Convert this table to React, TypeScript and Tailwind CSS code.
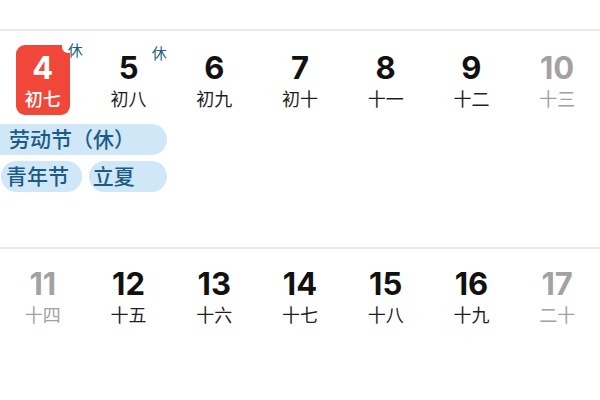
import React from "react";

type Day = { d: string; lunar: string; muted?: boolean; today?: boolean; rest?: boolean };

const week1: Day[] = [
  { d: "4", lunar: "初七", today: true, rest: true },
  { d: "5", lunar: "初八", rest: true },
  { d: "6", lunar: "初九" },
  { d: "7", lunar: "初十" },
  { d: "8", lunar: "十一" },
  { d: "9", lunar: "十二" },
  { d: "10", lunar: "十三", muted: true },
];

const week2: Day[] = [
  { d: "11", lunar: "十四", muted: true },
  { d: "12", lunar: "十五" },
  { d: "13", lunar: "十六" },
  { d: "14", lunar: "十七" },
  { d: "15", lunar: "十八" },
  { d: "16", lunar: "十九" },
  { d: "17", lunar: "二十", muted: true },
];

const cjk = "font-['Inter','Noto_Sans_CJK_SC',sans-serif]";

function DayCell({ day }: { day: Day }) {
  if (day.today) {
    return (
      <div className="flex justify-center">
        <div className="relative flex h-[70px] w-[54px] flex-col items-center rounded-[9px] bg-[#f1473a] pt-[5px] text-white">
          <span className="text-[31px] font-bold leading-[36px]">{day.d}</span>
          <span className="mt-[3px] text-[18px] font-medium leading-[22px]">{day.lunar}</span>
          <span className="absolute -right-[4px] -top-[4px] h-[12px] w-[12px] rounded-full bg-white" />
          <span className="absolute -right-[13px] -top-[2px] text-[15px] leading-[16px] text-[#245f80]">休</span>
        </div>
      </div>
    );
  }
  return (
    <div className="relative flex flex-col items-center pt-[5px]">
      <span
        className={`text-[31px] font-bold leading-[36px] ${
          day.muted ? "text-[#a2a2a2]" : "text-[#111111]"
        }`}
      >
        {day.d}
      </span>
      <span
        className={`mt-[3px] text-[18px] leading-[22px] ${day.muted ? "text-[#a2a2a2]" : "text-[#1f1f1f]"}`}
      >
        {day.lunar}
      </span>
      {day.rest && (
        <span className="absolute left-[66px] top-[1px] text-[15px] leading-[16px] text-[#245f80]">
          休
        </span>
      )}
    </div>
  );
}

function Pill({ children, className }: { children: React.ReactNode; className: string }) {
  return (
    <div
      className={`flex h-[31px] items-center rounded-full bg-[#cfe7f7] text-[21px] font-medium text-[#1d5b86] ${className}`}
    >
      {children}
    </div>
  );
}

export default function App() {
  return (
    <div className={`h-[400px] w-[600px] overflow-hidden bg-white ${cjk}`}>
      <div className="h-[29px]" />
      <div className="h-[2px] bg-[#e9e9e9]" />

      {/* week 1 */}
      <div className="grid grid-cols-7 pt-[14px]">
        {week1.map((day) => (
          <DayCell key={day.d} day={day} />
        ))}
      </div>

      {/* events */}
      <div className="mt-[9px] grid grid-cols-7 gap-y-[6px]">
        <Pill className="col-span-2 -ml-[20px] mr-[4px] pl-[29px]">劳动节（休）</Pill>
        <div className="col-span-5" />
        <Pill className="col-span-1 ml-[1px] mr-[4px] pl-[5px]">青年节</Pill>
        <Pill className="col-span-1 ml-[3px] mr-[4px] pl-[4px]">立夏</Pill>
      </div>

      <div className="mt-[55px] h-[2px] bg-[#e9e9e9]" />

      {/* week 2 */}
      <div className="grid grid-cols-7 pt-[12px]">
        {week2.map((day) => (
          <DayCell key={day.d} day={day} />
        ))}
      </div>
    </div>
  );
}
